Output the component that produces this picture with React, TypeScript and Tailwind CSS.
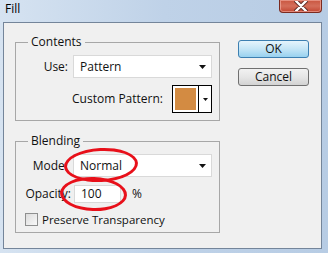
import React from "react";

const font = { fontFamily: '"Open Sans", "Noto Sans", sans-serif' };

function Arrow() {
	return (
		<svg width="7" height="4" viewBox="0 0 7 4" className="block">
			<path d="M0 0 H7 L3.5 4 Z" fill="#111" />
		</svg>
	);
}

function Select({ value }: { value: string }) {
	return (
		<div className="w-[139px] h-[23px] bg-white border border-[#d9d9d9] flex items-center justify-between pl-[6px] pr-[5px]">
			<span className="text-[12px] leading-none text-[#111]">{value}</span>
			<Arrow />
		</div>
	);
}

function Group({ title, children }: { title: string; children: React.ReactNode }) {
	return (
		<fieldset className="w-[205px] border border-[#a7a7a7] px-[7px]">
			<legend className="ml-[5px] px-[3px] text-[12px] leading-[14px] text-[#111]">{title}</legend>
			{children}
		</fieldset>
	);
}

function CloseButton() {
	return (
		<div className="w-[43px] h-[13px] rounded-b-[4px] border border-t-0 border-[#7a2a1f] bg-gradient-to-b from-[#c9553f] via-[#d46e5a] to-[#c24430] flex items-center justify-center shadow-[inset_0_0_0_1px_rgba(255,200,190,0.5)]">
			<svg width="14" height="10" viewBox="0 0 14 10">
				<path d="M2 0 L12 10 M12 0 L2 10" stroke="#5a2a25" strokeWidth="4.2" strokeLinecap="round" />
				<path d="M2 0 L12 10 M12 0 L2 10" stroke="#fff" strokeWidth="2.4" strokeLinecap="round" />
			</svg>
		</div>
	);
}

export default function App() {
	return (
		<div className="w-[330px] h-[257px] bg-white relative" style={font}>
			<div className="w-[328px] h-[253px] flex flex-col bg-gradient-to-r from-[#d6e3f1] via-[#bfd2e8] to-[#b7cce4]">
				<div className="h-[22px] flex justify-between items-start">
					<span className="pl-[5px] pt-[1px] text-[12px] leading-[15px] text-black">Fill</span>
					<div className="mr-[6px]">
						<CloseButton />
					</div>
				</div>
				<div className="ml-[3px] mr-[6px] h-[227px] border border-[#74859a] bg-[#f0f0f0] flex">
					<div className="pl-[11px] pt-[12px] flex flex-col">
						<Group title="Contents">
							<div className="pt-[6px] pb-[7px] flex flex-col gap-[7px]">
								<div className="flex items-center justify-end gap-[5px]">
									<span className="text-[12px] leading-none text-[#111]">Use:</span>
									<Select value="Pattern" />
								</div>
								<div className="flex items-center justify-end gap-[9px]">
									<span className="text-[12px] leading-none text-[#111]">Custom Pattern:</span>
									<div className="w-[40px] h-[28px] border border-black bg-white flex">
										<div className="w-[26px] p-[2px] border-r border-black">
											<div className="w-full h-full bg-[#d38b42]" />
										</div>
										<div className="flex-1 flex items-center justify-center">
											<svg width="5" height="3" viewBox="0 0 5 3"><path d="M0 0 H5 L2.5 3 Z" fill="#111" /></svg>
										</div>
									</div>
								</div>
							</div>
						</Group>
						<div className="mt-[13px]">
							<Group title="Blending">
								<div className="pt-[6px] pb-[6px] flex flex-col">
									<div className="flex items-center justify-end gap-[5px]">
										<span className="text-[12px] leading-none text-[#111]">Mode:</span>
										<Select value="Normal" />
									</div>
									<div className="mt-[8px] flex items-center pl-[2px]">
										<span className="w-[49px] text-right pr-[3px] text-[12px] leading-none text-[#111]">Opacity:</span>
										<div className="w-[47px] h-[18px] bg-white border border-[#d9d9d9] flex items-center pl-[6px]">
											<span className="text-[12px] leading-none text-[#111]">100</span>
										</div>
										<span className="ml-[11px] text-[12px] leading-none text-[#111]">%</span>
									</div>
									<div className="mt-[10px] flex items-center gap-[4px] pl-[2px]">
										<div className="w-[13px] h-[13px] border border-[#8e8f8f] bg-gradient-to-br from-[#dcdcdc] to-[#f8f8f8]" />
										<span className="text-[11.5px] leading-none text-[#111]">Preserve Transparency</span>
									</div>
								</div>
							</Group>
						</div>
					</div>
					<div className="pl-[18px] pt-[17px] flex flex-col gap-[10px]">
						<div className="w-[71px] h-[18px] rounded-[3px] border border-[#3c7fb1] bg-gradient-to-b from-[#e5f4fc] via-[#c4e5f6] to-[#98d1ef] flex items-center justify-center text-[12px] leading-none text-[#111]">
							OK
						</div>
						<div className="w-[71px] h-[18px] rounded-[3px] border border-[#707070] bg-gradient-to-b from-[#f2f2f2] via-[#e6e6e6] to-[#d2d2d2] flex items-center justify-center text-[12px] leading-none text-[#111]">
							Cancel
						</div>
					</div>
				</div>
			</div>
			<div className="absolute left-[64px] top-[148px] w-[74px] h-[34px] rounded-[50%] border-[3px] border-[#e8101a] -rotate-3" />
			<div className="absolute left-[60px] top-[177px] w-[67px] h-[34px] rounded-[50%] border-[3px] border-[#e8101a] rotate-2" />
		</div>
	);
}
